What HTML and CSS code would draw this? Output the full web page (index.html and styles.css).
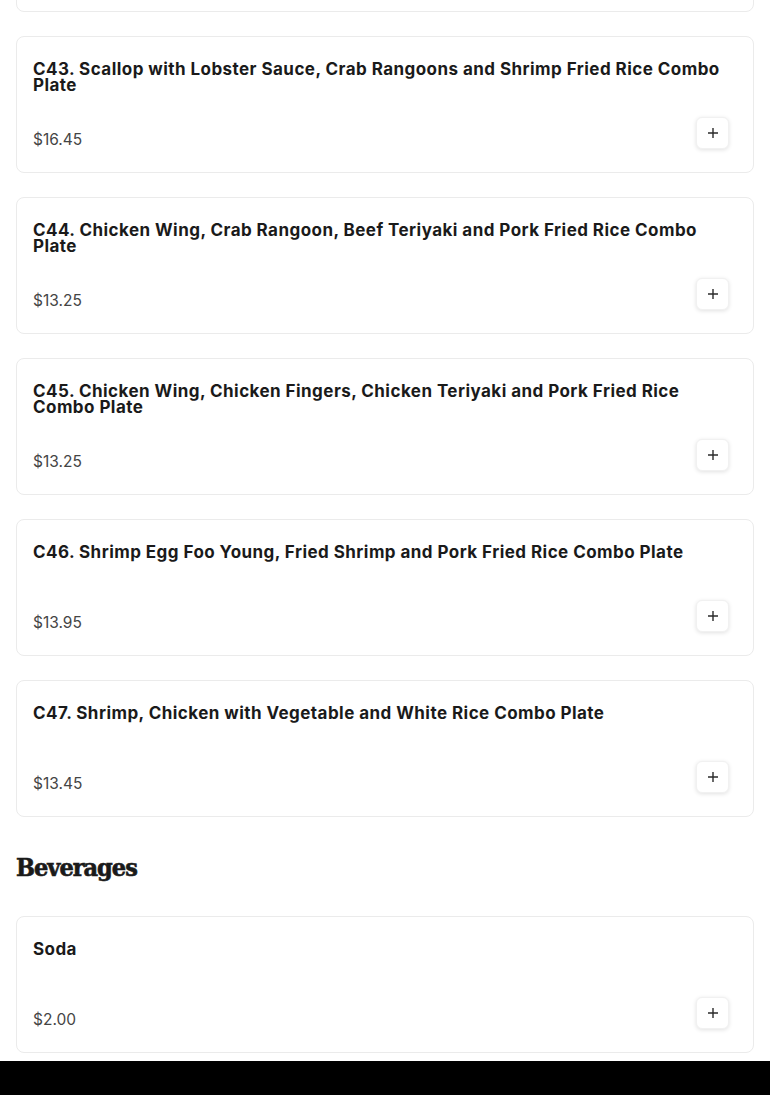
FILE: index.html
```html
<!DOCTYPE html>
<html lang="en">
<head>
<meta charset="utf-8">
<title>Menu</title>
<link rel="stylesheet" href="styles.css">
</head>
<body>
<main class="menu">
  <section class="items">
    <article class="card card-cut" aria-hidden="true"></article>
    <article class="card">
      <h3 class="title">C43. Scallop with Lobster Sauce, Crab Rangoons and Shrimp Fried Rice Combo Plate</h3>
      <div class="row"><span class="price">$16.45</span><button class="add" aria-label="Add"><svg viewBox="0 0 12 12" width="12" height="12"><path d="M6 1v10M1 6h10" stroke="#2b2b2b" stroke-width="1.4" fill="none"/></svg></button></div>
    </article>
    <article class="card">
      <h3 class="title">C44. Chicken Wing, Crab Rangoon, Beef Teriyaki and Pork Fried Rice Combo Plate</h3>
      <div class="row"><span class="price">$13.25</span><button class="add" aria-label="Add"><svg viewBox="0 0 12 12" width="12" height="12"><path d="M6 1v10M1 6h10" stroke="#2b2b2b" stroke-width="1.4" fill="none"/></svg></button></div>
    </article>
    <article class="card">
      <h3 class="title">C45. Chicken Wing, Chicken Fingers, Chicken Teriyaki and Pork Fried Rice Combo Plate</h3>
      <div class="row"><span class="price">$13.25</span><button class="add" aria-label="Add"><svg viewBox="0 0 12 12" width="12" height="12"><path d="M6 1v10M1 6h10" stroke="#2b2b2b" stroke-width="1.4" fill="none"/></svg></button></div>
    </article>
    <article class="card">
      <h3 class="title">C46. Shrimp Egg Foo Young, Fried Shrimp and Pork Fried Rice Combo Plate</h3>
      <div class="row"><span class="price">$13.95</span><button class="add" aria-label="Add"><svg viewBox="0 0 12 12" width="12" height="12"><path d="M6 1v10M1 6h10" stroke="#2b2b2b" stroke-width="1.4" fill="none"/></svg></button></div>
    </article>
    <article class="card">
      <h3 class="title">C47. Shrimp, Chicken with Vegetable and White Rice Combo Plate</h3>
      <div class="row"><span class="price">$13.45</span><button class="add" aria-label="Add"><svg viewBox="0 0 12 12" width="12" height="12"><path d="M6 1v10M1 6h10" stroke="#2b2b2b" stroke-width="1.4" fill="none"/></svg></button></div>
    </article>
  </section>
  <h2 class="section-title">Beverages</h2>
  <section class="items">
    <article class="card">
      <h3 class="title">Soda</h3>
      <div class="row"><span class="price">$2.00</span><button class="add" aria-label="Add"><svg viewBox="0 0 12 12" width="12" height="12"><path d="M6 1v10M1 6h10" stroke="#2b2b2b" stroke-width="1.4" fill="none"/></svg></button></div>
    </article>
  </section>
</main>
<footer class="footer"></footer>
</body>
</html>
```
FILE: styles.css
```css
html, body {
  margin: 0;
  padding: 0;
  background: #fff;
  overflow: hidden;
}
body {
  font-family: Inter, "Open Sans", sans-serif;
  color: #1c1c1c;
}
.menu {
  padding: 0 16px;
}
.items {
  display: flex;
  flex-direction: column;
  gap: 24px;
}
.card {
  box-sizing: border-box;
  height: 137px;
  border: 1px solid #ebebeb;
  border-radius: 8px;
  padding: 24px 24px 22px 16px;
  display: flex;
  flex-direction: column;
  justify-content: space-between;
  background: #fff;
}
.card-cut {
  margin-top: -125px;
}
.title {
  margin: 0;
  font-size: 17px;
  line-height: 16px;
  font-weight: 700;
  letter-spacing: 0.45px;
  color: #1a1a1a;
}
.row {
  display: flex;
  justify-content: space-between;
  align-items: flex-end;
}
.price {
  font-size: 15.5px;
  line-height: 20px;
  color: #454545;
}
.add {
  width: 33px;
  height: 32px;
  margin-bottom: 1px;
  padding: 0;
  border: 1px solid #f1f1f1;
  border-radius: 6px;
  background: #fff;
  box-shadow: 0 1px 4px rgba(0, 0, 0, 0.12);
  display: flex;
  align-items: center;
  justify-content: center;
}
.section-title {
  margin: 35px 0 32px;
  font-family: "DejaVu Serif Condensed", "DejaVu Serif", serif;
  font-weight: 900;
  font-size: 25px;
  line-height: 32px;
  letter-spacing: -1px;
  -webkit-text-stroke: 0.6px #1a1a1a;
  color: #1a1a1a;
}
.footer {
  margin-top: 8px;
  height: 40px;
  background: #000;
}
```
